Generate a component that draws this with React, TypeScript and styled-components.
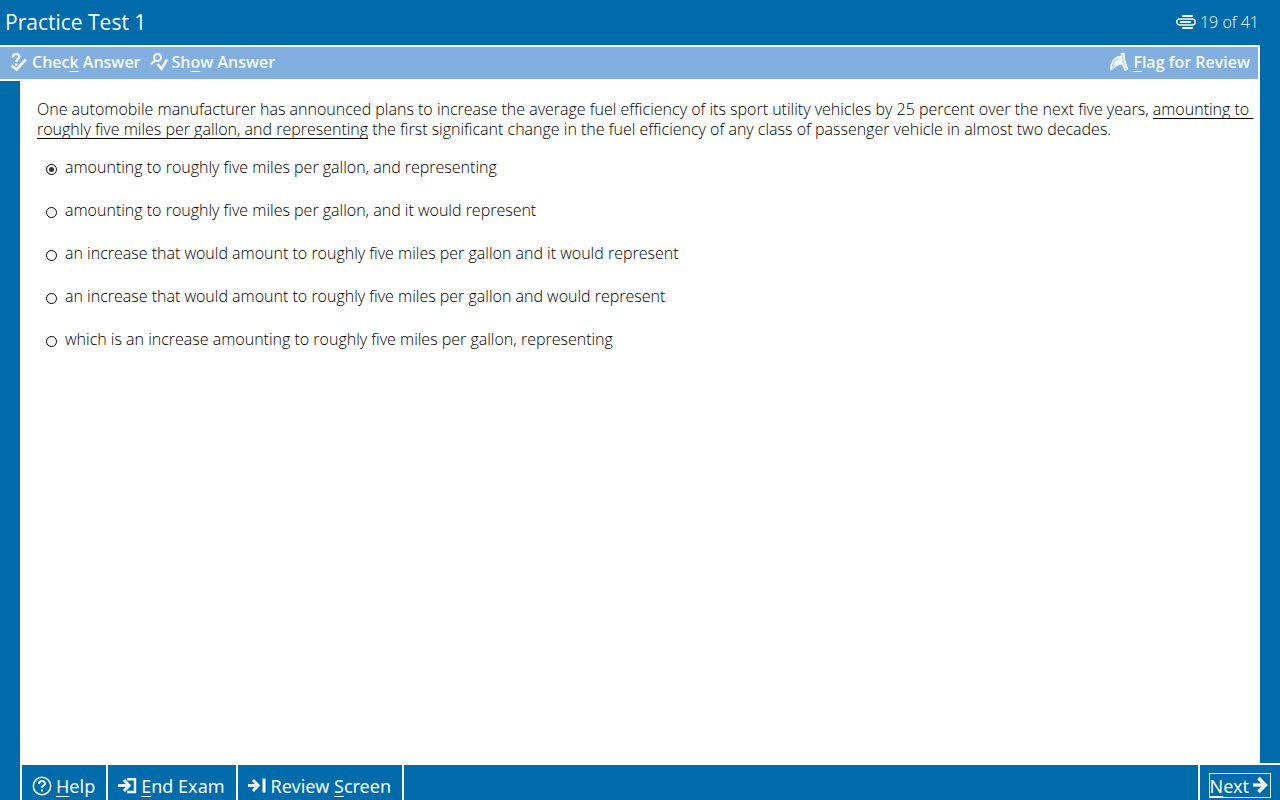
import React, { useState } from "react";
import styled, { createGlobalStyle } from "styled-components";

const BLUE = "#006bab";
const BAR = "#82aee0";
const PALE = "#f4fdff";

const GlobalStyle = createGlobalStyle`
  * { box-sizing: border-box; }
  body { margin: 0; background: ${BLUE}; font-family: "Open Sans", "Noto Sans", sans-serif; }
`;

const Screen = styled.div`
  min-height: 100vh;
  display: flex;
  flex-direction: column;
  background: ${BLUE};
`;

const Header = styled.header`
  display: flex;
  align-items: center;
  justify-content: space-between;
  height: 45px;
  padding: 0 21px 2px 5px;
  color: ${PALE};
`;

const Title = styled.h1`
  margin: 0;
  font-size: 21px;
  line-height: 28px;
  font-weight: 400;
`;

const Progress = styled.div`
  display: flex;
  align-items: center;
  gap: 4px;
  font-size: 16px;
  line-height: 24px;
  font-weight: 300;
`;

const Toolbar = styled.div`
  display: flex;
  align-items: center;
  justify-content: space-between;
  height: 36px;
  margin-right: 20px;
  padding: 0 8px 2px 10px;
  background: ${BAR};
  border: solid #fff;
  border-width: 2px 2px 2px 0;
`;

const ToolGroup = styled.div`
  display: flex;
  gap: 9px;
`;

const ToolButton = styled.button`
  display: flex;
  align-items: center;
  gap: 4px;
  padding: 0;
  border: 0;
  background: none;
  color: ${PALE};
  font-family: inherit;
  font-size: 16px;
  line-height: 24px;
  font-weight: 600;
`;

const Key = styled.span`
  text-decoration: underline 1px;
  text-underline-offset: 3px;
  text-decoration-skip-ink: none;
`;

const Main = styled.main`
  flex: 1;
  margin: 0 20px;
  padding: 18px 0 18px 17px;
  background: #fff;
  color: #000;
  font-size: 16px;
  line-height: 20px;
  font-weight: 300;
`;

const Question = styled.p`
  margin: 0;
`;

const Passage = styled.u`
  text-decoration: underline 1px;
  text-underline-offset: 3px;
  text-decoration-skip-ink: none;
`;

const Options = styled.fieldset`
  display: flex;
  flex-direction: column;
  align-items: flex-start;
  gap: 23px;
  margin: 18px 0 0;
  padding: 0 0 0 9px;
  border: 0;
`;

const Option = styled.label`
  display: flex;
  align-items: center;
  gap: 8px;
`;

const Radio = styled.input`
  appearance: none;
  display: grid;
  place-items: center;
  width: 11px;
  height: 11px;
  margin: 4px 0 0;
  border: 1px solid #000;
  border-radius: 50%;
  background: #fff;
  &:checked::before {
    content: "";
    width: 5px;
    height: 5px;
    border-radius: 50%;
    background: #333;
  }
`;

const Footer = styled.footer`
  display: flex;
  height: 35px;
  margin-left: 20px;
  border-left: 2px solid #fff;
`;

const FooterCell = styled.div<{ $last?: boolean }>`
  display: flex;
  padding: ${(p) => (p.$last ? "8px 9px 0 9px" : "8px 11px 0 10px")};
  border: solid #fff;
  border-width: ${(p) => (p.$last ? "0 0 0 2px" : "0 2px 0 0")};
  margin-left: ${(p) => (p.$last ? "auto" : "0")};
`;

const FooterButton = styled.button<{ $focused?: boolean }>`
  display: flex;
  align-items: center;
  gap: 4px;
  height: 25px;
  padding: 0;
  border: ${(p) => (p.$focused ? `1px solid ${PALE}` : "0")};
  background: none;
  color: ${PALE};
  font-family: "Noto Sans", sans-serif;
  font-size: 18px;
  line-height: 24px;
  white-space: nowrap;
`;

const Corner = styled.div`
  width: 20px;
  height: 2px;
  margin: -2px 0 0 auto;
  background: #fff;
`;

const CheckIcon = () => (
  <svg width="18" height="20" viewBox="0 0 18 20" fill="none" stroke={PALE} aria-hidden="true">
    <path d="M3 5.500C3 .8 9.300 .8 9.300 4.800C9.300 7.300 6.200 7 6.200 10" strokeWidth="2.400" />
    <path d="M1.500 13.500L6.500 17.500L16 7.500" strokeWidth="2.600" />
    <path d="M6.200 11.500v2" strokeWidth="2.400" />
  </svg>
);

const ShowIcon = () => (
  <svg width="18" height="20" viewBox="0 0 18 20" fill="none" stroke={PALE} aria-hidden="true">
    <circle cx="7.500" cy="5.500" r="3.500" strokeWidth="2" />
    <path d="M5 8.500L.8 12.500" strokeWidth="2.200" />
    <path d="M7.500 12L11.500 17L17 7.500" strokeWidth="2.600" />
  </svg>
);

const FlagIcon = () => (
  <svg width="20" height="20" viewBox="0 0 20 20" aria-hidden="true">
    <path d="M1 18.500C0.500 12 4 7 8 4.500L13.500 3.500L15 13C11 12 8 13.500 4.500 17Z" fill={PALE} />
    <path d="M12.500 5V1.500H15L15.500 8L18.500 17L16 18L13 11" fill="#c3dcf4" stroke={PALE} strokeWidth="1.400" />
    <path d="M3 14.500C4.500 10 6.500 8 9 6.500M3 17L6 13" fill="none" stroke={BAR} strokeWidth=".8" />
  </svg>
);

const ProgressIcon = () => (
  <svg width="20" height="16" viewBox="0 0 20 16" fill="none" stroke={PALE} aria-hidden="true">
    <path d="M6 2h11M6 14h11" strokeWidth="2" />
    <rect x=".8" y="5" width="18.400" height="6" rx="3" strokeWidth="1.400" />
    <path d="M4 8h11" strokeWidth="2" />
  </svg>
);

const HelpIcon = () => (
  <svg width="20" height="20" viewBox="0 0 20 20" fill="none" stroke={PALE} aria-hidden="true">
    <circle cx="10" cy="10" r="8.700" strokeWidth="1.500" />
    <path d="M7 8C7 4.200 13 4.200 13 7.500C13 9.600 10 9.500 10 12" strokeWidth="2" />
    <path d="M10 13.500v2" strokeWidth="2" />
  </svg>
);

const EndIcon = () => (
  <svg width="19" height="18" viewBox="0 0 19 18" fill="none" stroke={PALE} aria-hidden="true">
    <path d="M0 8.500H11" strokeWidth="2.800" />
    <path d="M6 3L11.200 8.500L6 14" strokeWidth="3" />
    <path d="M9 2.200H17V15H9" strokeWidth="2.400" />
  </svg>
);

const ReviewIcon = () => (
  <svg width="19" height="18" viewBox="0 0 19 18" fill="none" stroke={PALE} aria-hidden="true">
    <path d="M0 8.500H10" strokeWidth="2.800" />
    <path d="M5 3L10.200 8.500L5 14" strokeWidth="2.800" />
    <path d="M16 1.500V15.500" strokeWidth="3" />
  </svg>
);

const NextIcon = () => (
  <svg width="17" height="18" viewBox="0 0 17 18" fill="none" stroke={PALE} aria-hidden="true">
    <path d="M0 8H12" strokeWidth="3.200" />
    <path d="M5.500 1L12.300 8L5.500 15" strokeWidth="3.600" />
  </svg>
);

const choices = [
  "amounting to roughly five miles per gallon, and representing",
  "amounting to roughly five miles per gallon, and it would represent",
  "an increase that would amount to roughly five miles per gallon and it would represent",
  "an increase that would amount to roughly five miles per gallon and would represent",
  "which is an increase amounting to roughly five miles per gallon, representing",
];

export default function App() {
  const [selected, setSelected] = useState(0);
  return (
    <>
      <GlobalStyle />
      <Screen>
        <Header>
          <Title>Practice Test 1</Title>
          <Progress>
            <ProgressIcon />
            19 of 41
          </Progress>
        </Header>
        <Toolbar>
          <ToolGroup>
            <ToolButton type="button">
              <CheckIcon />
              <span>Chec<Key>k</Key> Answer</span>
            </ToolButton>
            <ToolButton type="button">
              <ShowIcon />
              <span>Sh<Key>o</Key>w Answer</span>
            </ToolButton>
          </ToolGroup>
          <ToolButton type="button">
            <FlagIcon />
            <span><Key>F</Key>lag for Review</span>
          </ToolButton>
        </Toolbar>
        <Main>
          <Question>
            One automobile manufacturer has announced plans to increase the average fuel efficiency of its sport
            utility vehicles by 25 percent over the next five years,{" "}
            <Passage>amounting to&nbsp;<wbr />roughly five miles per gallon, and representing</Passage> the first
            significant change in the fuel efficiency of any class of passenger vehicle in almost two decades.
          </Question>
          <Options aria-label="Answer choices">
            {choices.map((text, i) => (
              <Option key={text}>
                <Radio type="radio" name="answer" checked={selected === i} onChange={() => setSelected(i)} />
                {text}
              </Option>
            ))}
          </Options>
        </Main>
        <Corner />
        <Footer>
          <FooterCell>
            <FooterButton type="button">
              <HelpIcon />
              <span><Key>H</Key>elp</span>
            </FooterButton>
          </FooterCell>
          <FooterCell>
            <FooterButton type="button">
              <EndIcon />
              <span><Key>E</Key>nd Exam</span>
            </FooterButton>
          </FooterCell>
          <FooterCell>
            <FooterButton type="button">
              <ReviewIcon />
              <span>Review <Key>S</Key>creen</span>
            </FooterButton>
          </FooterCell>
          <FooterCell $last>
            <FooterButton type="button" $focused>
              <span><Key>N</Key>ext</span>
              <NextIcon />
            </FooterButton>
          </FooterCell>
        </Footer>
      </Screen>
    </>
  );
}
